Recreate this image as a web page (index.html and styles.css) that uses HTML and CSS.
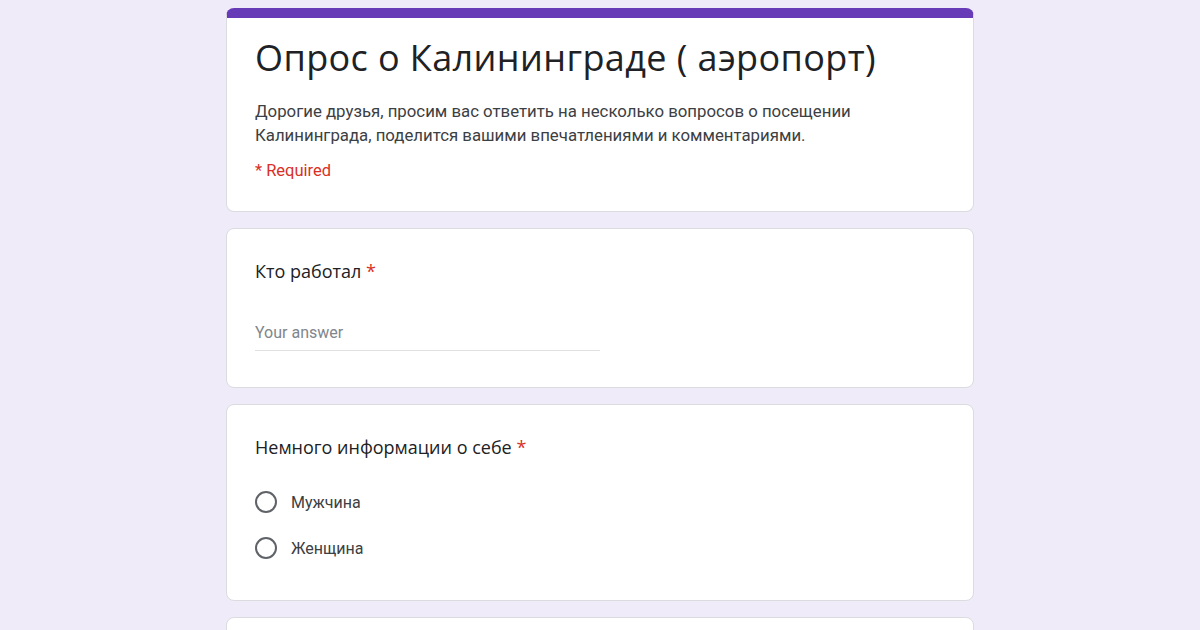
FILE: index.html
```html
<!DOCTYPE html>
<html lang="ru">
<head>
  <meta charset="UTF-8" />
  <meta name="viewport" content="width=device-width, initial-scale=1.0" />
  <title>Опрос о Калининграде ( аэропорт)</title>
  <link rel="stylesheet" href="styles.css">
</head>
<body>

  <div class="form-wrap">
    <div class="card card-head">
      <h1>Опрос о Калининграде ( аэропорт)</h1>
      <p class="desc">Дорогие друзья, просим вас ответить на несколько вопросов о посещении Калининграда, поделится вашими впечатлениями и комментариями.</p>
      <p class="req-note">* Required</p>
    </div>

    <div class="card question q-text">
      <div class="q-title">Кто работал <span class="star">*</span></div>
      <input class="answer" type="text" placeholder="Your answer" />
    </div>

    <div class="card question q-radio">
      <div class="q-title">Немного информации о себе <span class="star">*</span></div>
      <ul class="options">
        <li><span class="radio"></span>Мужчина</li>
        <li><span class="radio"></span>Женщина</li>
      </ul>
    </div>

    <div class="card question"></div>
  </div>

</body>
</html>
```

FILE: styles.css
```css
body { margin: 0; padding: 8px 0 0; background: #f0ebf8; font-family: Roboto, Arial, sans-serif; color: #202124; }
.form-wrap { width: 748px; margin: 0 auto; display: flex; flex-direction: column; gap: 16px; }
.card { background: #fff; border: 1px solid #dadce0; border-radius: 8px; box-sizing: border-box; }
.card-head { border-top: 10px solid #673ab7; padding: 15px 28px 0; height: 204px; }
.card-head h1 { font-family: "Open Sans", sans-serif; font-weight: 400; font-size: 36px; line-height: 50px; margin: 0; letter-spacing: 0.4px; color: #202124; }
.desc { font-size: 16.8px; line-height: 24px; margin: 16px 0 0; max-width: 620px; color: #3c4043; }
.req-note { color: #d93025; font-size: 16.5px; line-height: 24px; margin: 12px 0 0; }
.question { padding: 28px 28px 0; }
.q-text { height: 160px; }
.q-radio { height: 197px; }
.q-title { font-family: "Open Sans", sans-serif; font-size: 18px; line-height: 28px; color: #202124; }
.star { color: #d93025; }
.answer { display: block; width: 50%; margin-top: 32px; border: 0; border-bottom: 1px solid #e0e0e0; padding: 6px 0 8px; font-family: Roboto, Arial, sans-serif; font-size: 16px; color: #202124; outline: none; }
.answer::placeholder { color: #80868b; }
.options { list-style: none; margin: 18px 0 0; padding: 0; }
.options li { display: flex; align-items: center; height: 46px; font-size: 16px; color: #3c4043; }
.radio { width: 18px; height: 18px; border: 2px solid #5f6368; border-radius: 50%; margin-right: 14px; }
```
